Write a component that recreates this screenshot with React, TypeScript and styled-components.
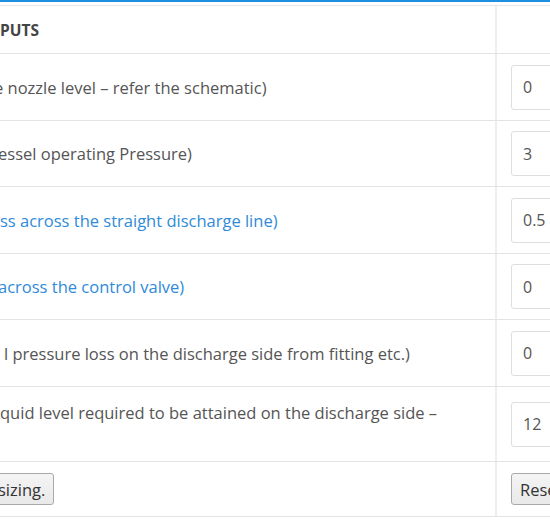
import * as React from 'react'
import styled, { createGlobalStyle } from 'styled-components'

const GlobalStyle = createGlobalStyle`
	html, body {
		margin: 0;
		padding: 0;
		background: #fff;
		overflow: hidden;
	}
	body {
		font-family: 'Open Sans', 'Liberation Sans', sans-serif;
		font-size: 16px;
		color: #555;
	}
`

const Page = styled.div`
	width: 550px;
	border-top: 2px solid #1e8fe1;
	padding-top: 3px;
	overflow: hidden;
`

const Table = styled.div`
	width: 700px;
	border-top: 1px solid #e6e6e6;
`

const Row = styled.div<{ $h: number }>`
	display: grid;
	grid-template-columns: 497px 1fr;
	height: ${p => p.$h}px;
	box-sizing: border-box;
	border-bottom: 1px solid #e3e3e3;
`

const LabelCell = styled.div`
	display: flex;
	align-items: center;
	overflow: hidden;
	border-right: 2px solid #eeeeee;
`

const ValueCell = styled.div`
	display: flex;
	align-items: center;
	padding-left: 14px;
`

const HeadText = styled.div<{ $offset: number }>`
	margin-left: ${p => p.$offset}px;
	font-size: 15.5px;
	font-weight: 700;
	color: #444;
	white-space: nowrap;
`

const Label = styled.div<{ $offset: number; $link?: boolean }>`
	margin-left: ${p => p.$offset}px;
	font-size: 16.5px;
	line-height: 23px;
	white-space: nowrap;
	color: ${p => (p.$link ? '#2f8ad8' : '#555')};
`

const NumberInput = styled.input`
	box-sizing: border-box;
	width: 120px;
	height: 45px;
	padding: 0 11px;
	border: 1px solid #dedede;
	border-radius: 3px;
	font-family: inherit;
	font-size: 16px;
	color: #555;
	background: #fff;
	outline: none;
`

const Button = styled.button<{ $offset?: number }>`
	box-sizing: border-box;
	height: 32px;
	margin-left: ${p => p.$offset || 0}px;
	padding: 0 8px;
	border: 1px solid #a9a9a9;
	border-radius: 3px;
	background: linear-gradient(#f4f4f4, #e9e9e9);
	font-family: inherit;
	font-size: 16.5px;
	color: #333;
	white-space: nowrap;
`

const rows: {
	label: string
	value: string
	offset: number
	link?: boolean
	h: number
	twoLine?: boolean
}[] = [
	{ label: 'e nozzle level – refer the schematic)', value: '0', offset: -6, h: 67 },
	{ label: 'essel operating Pressure)', value: '3', offset: -2, h: 66 },
	{ label: 'ss across the straight discharge line)', value: '0.5', offset: 0, link: true, h: 67 },
	{ label: 'across the control valve)', value: '0', offset: -2, link: true, h: 66 },
	{ label: 'l pressure loss on the discharge side from fitting etc.)', value: '0', offset: 4, h: 67 },
	{
		label: 'quid level required to be attained on the discharge side –',
		value: '12',
		offset: 0,
		h: 75,
		twoLine: true,
	},
]

export default function App() {
	return (
		<>
			<GlobalStyle />
			<Page>
				<Table>
					<Row $h={48}>
						<LabelCell>
							<HeadText $offset={0}>PUTS</HeadText>
						</LabelCell>
						<ValueCell />
					</Row>
					{rows.map(r => (
						<Row key={r.label} $h={r.h}>
							<LabelCell>
								<Label $offset={r.offset} $link={r.link}>
									{r.label}
									{r.twoLine && (
										<>
											<br />
											{'\u00a0'}
										</>
									)}
								</Label>
							</LabelCell>
							<ValueCell>
								<NumberInput defaultValue={r.value} />
							</ValueCell>
						</Row>
					))}
					<Row $h={55}>
						<LabelCell>
							<Button $offset={-11}>sizing.</Button>
						</LabelCell>
						<ValueCell>
							<Button>Reset</Button>
						</ValueCell>
					</Row>
				</Table>
			</Page>
		</>
	)
}
